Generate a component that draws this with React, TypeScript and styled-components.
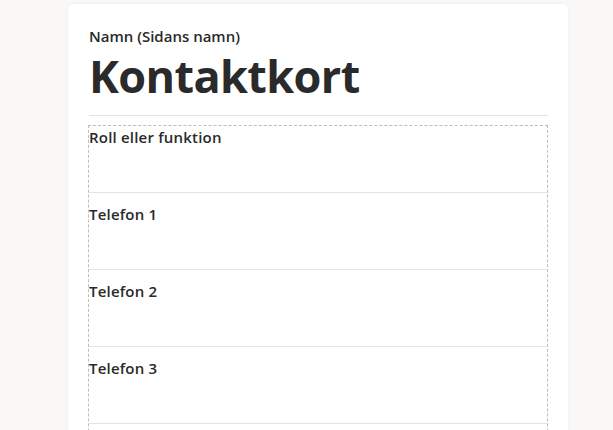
import styled, { createGlobalStyle } from 'styled-components';

const GlobalStyle = createGlobalStyle`
  html, body {
    margin: 0;
    padding: 0;
    background: #f9f8f6;
    font-family: "Open Sans", Lato, sans-serif;
    color: #2a2a2a;
  }
`;

const Page = styled.div`
  padding: 4px 0 0 68px;
  height: 426px;
  overflow: hidden;
`;

const Card = styled.section`
  width: 500px;
  min-height: 500px;
  box-sizing: border-box;
  padding: 22px 20px 0 21px;
  background: #ffffff;
  border-radius: 5px;
  box-shadow: 0 0 3px rgba(0, 0, 0, 0.06);
`;

const PageName = styled.div`
  font-size: 15px;
  font-weight: 600;
  line-height: 20px;
  color: #2a2a2a;
`;

const Title = styled.h1`
  margin: 2px 0 0;
  font-size: 45px;
  font-weight: 700;
  line-height: 56px;
  letter-spacing: -0.6px;
  color: #2a2a2a;
`;

const Divider = styled.hr`
  margin: 11px 0 9px;
  border: 0;
  border-top: 1px solid #e4e4e4;
`;

const FieldBox = styled.div`
  margin-left: -1px;
  border: 1px dashed #bdbdbd;
  border-bottom: 0;
`;

const Field = styled.div<{ $first?: boolean }>`
  height: ${({ $first }) => ($first ? '65px' : '65px')};
  padding-top: ${({ $first }) => ($first ? '1px' : '11px')};
  border-bottom: 1px solid #e4e4e4;
`;

const Label = styled.div`
  font-size: 15px;
  font-weight: 600;
  line-height: 20px;
  letter-spacing: 0.2px;
  color: #2a2a2a;
`;

const fields = ['Roll eller funktion', 'Telefon 1', 'Telefon 2', 'Telefon 3', ''];

export default function App() {
  return (
    <>
      <GlobalStyle />
      <Page>
        <Card>
          <PageName>Namn (Sidans namn)</PageName>
          <Title>Kontaktkort</Title>
          <Divider />
          <FieldBox>
            {fields.map((f, i) => (
              <Field key={i} $first={i === 0}>
                {f ? <Label>{f}</Label> : null}
              </Field>
            ))}
          </FieldBox>
        </Card>
      </Page>
    </>
  );
}
